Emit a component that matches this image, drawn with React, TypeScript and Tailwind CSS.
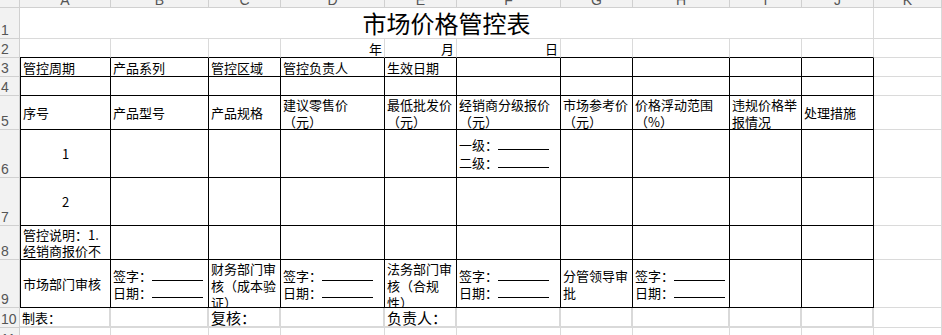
import type { ReactNode } from "react";

const borders = {
  k: "border-r border-b border-black",
  kl: "border-r border-b border-l border-black",
  g: "border-r border-b border-[#dadada]",
  t: "border-r border-b border-r-[#dadada] border-b-black",
  g2: "border-r-2 border-b-2 border-[#d9d9d9]",
};

type Variant = keyof typeof borders;

function Cell({
  v = "k",
  className = "",
  children,
}: {
  v?: Variant;
  className?: string;
  children?: ReactNode;
}) {
  return (
    <div
      className={`flex min-w-0 items-center overflow-hidden px-[2px] text-[13px] leading-[17px] text-black ${borders[v]} ${className}`}
    >
      {children}
    </div>
  );
}

function RowHead({ n }: { n: number }) {
  return (
    <div className="flex items-end overflow-hidden border-r border-b border-[#d0d0d0] bg-[#f2f2f2] pb-[1px] pl-[1px] font-['Liberation_Sans',sans-serif] text-[14px] leading-none text-[#555]">
      {n}
    </div>
  );
}

function Lines({ lines, className = "" }: { lines: string[]; className?: string }) {
  return (
    <div className={`flex flex-col ${className}`}>
      {lines.map((l) => (
        <span key={l} className="whitespace-nowrap">
          {l}
        </span>
      ))}
    </div>
  );
}

function Sign({ a, b, lh = "leading-[17px]" }: { a: string; b: string; lh?: string }) {
  return (
    <div className={`flex flex-col ${lh}`}>
      <span className="whitespace-nowrap">
        {a}
        <span className="inline-block w-[51px] border-b border-black align-baseline" />
      </span>
      <span className="whitespace-nowrap">
        {b}
        <span className="inline-block w-[51px] border-b border-black align-baseline" />
      </span>
    </div>
  );
}

const letters = ["A", "B", "C", "D", "E", "F", "G", "H", "I", "J", "K"];

export default function App() {
  return (
    <div className="h-[335px] w-[942px] overflow-hidden bg-white font-['Noto_Sans_CJK_SC',sans-serif]">
      <div className="grid grid-cols-[20px_91px_98px_72px_104px_72px_104px_72px_97px_72px_72px_1fr] grid-rows-[8px_31px_19px_19px_19px_34px_48px_48px_34px_48px_20px_20px]">
        {/* column letters, only their lower part shows */}
        <div className="border-r border-b border-[#d0d0d0] bg-[#f2f2f2]" />
        {letters.map((l) => (
          <div
            key={l}
            className="flex items-end justify-center overflow-hidden border-r border-b border-[#d0d0d0] bg-[#f2f2f2] font-['Liberation_Sans',sans-serif] text-[14px] leading-[10px] text-[#555]"
          >
            <span className="mb-[2px]">{l}</span>
          </div>
        ))}

        {/* row 1 */}
        <RowHead n={1} />
        <div className="col-span-10 flex items-center justify-center border-r border-b border-[#dadada] text-[24px] leading-none text-black">
          市场价格管控表
        </div>
        <Cell v="g" />

        {/* row 2 */}
        <RowHead n={2} />
        <Cell v="t" />
        <Cell v="t" />
        <Cell v="t" />
        <Cell v="t" className="justify-end leading-none">年</Cell>
        <Cell v="t" className="justify-end leading-none">月</Cell>
        <Cell v="t" className="justify-end leading-none">日</Cell>
        <Cell v="t" />
        <Cell v="t" />
        <Cell v="t" />
        <Cell v="t" />
        <Cell v="g" />

        {/* row 3 */}
        <RowHead n={3} />
        <Cell v="kl">管控周期</Cell>
        <Cell>产品系列</Cell>
        <Cell>管控区域</Cell>
        <Cell>管控负责人</Cell>
        <Cell>生效日期</Cell>
        <Cell />
        <Cell />
        <Cell />
        <Cell />
        <Cell />
        <Cell v="g" />

        {/* row 4 */}
        <RowHead n={4} />
        <Cell v="kl" />
        <Cell />
        <Cell />
        <Cell />
        <Cell />
        <Cell />
        <Cell />
        <Cell />
        <Cell />
        <Cell />
        <Cell v="g" />

        {/* row 5 */}
        <RowHead n={5} />
        <Cell v="kl">序号</Cell>
        <Cell>产品型号</Cell>
        <Cell>产品规格</Cell>
        <Cell>
          <Lines lines={["建议零售价", "（元）"]} />
        </Cell>
        <Cell>
          <Lines lines={["最低批发价", "（元）"]} />
        </Cell>
        <Cell>
          <Lines lines={["经销商分级报价", "（元）"]} />
        </Cell>
        <Cell>
          <Lines lines={["市场参考价", "（元）"]} />
        </Cell>
        <Cell>
          <Lines lines={["价格浮动范围", "（%）"]} />
        </Cell>
        <Cell>
          <Lines lines={["违规价格举", "报情况"]} />
        </Cell>
        <Cell>处理措施</Cell>
        <Cell v="g" />

        {/* row 6 */}
        <RowHead n={6} />
        <Cell v="kl" className="justify-center">1</Cell>
        <Cell />
        <Cell />
        <Cell />
        <Cell />
        <Cell>
          <Sign a="一级：" b="二级：" lh="leading-[18px]" />
        </Cell>
        <Cell />
        <Cell />
        <Cell />
        <Cell />
        <Cell v="g" />

        {/* row 7 */}
        <RowHead n={7} />
        <Cell v="kl" className="justify-center">2</Cell>
        <Cell />
        <Cell />
        <Cell />
        <Cell />
        <Cell />
        <Cell />
        <Cell />
        <Cell />
        <Cell />
        <Cell v="g" />

        {/* row 8 */}
        <RowHead n={8} />
        <Cell v="kl">
          <Lines lines={["管控说明：1.", "经销商报价不"]} className="leading-[16px]" />
        </Cell>
        <Cell />
        <Cell />
        <Cell />
        <Cell />
        <Cell />
        <Cell />
        <Cell />
        <Cell />
        <Cell />
        <Cell v="g" />

        {/* row 9 */}
        <RowHead n={9} />
        <Cell v="kl">市场部门审核</Cell>
        <Cell>
          <Sign a="签字：" b="日期：" />
        </Cell>
        <Cell className="items-start">
          <Lines lines={["财务部门审", "核（成本验", "证）"]} />
        </Cell>
        <Cell>
          <Sign a="签字：" b="日期：" />
        </Cell>
        <Cell className="items-start">
          <Lines lines={["法务部门审", "核（合规", "性）"]} />
        </Cell>
        <Cell>
          <Sign a="签字：" b="日期：" />
        </Cell>
        <Cell>
          <Lines lines={["分管领导审", "批"]} />
        </Cell>
        <Cell>
          <Sign a="签字：" b="日期：" />
        </Cell>
        <Cell />
        <Cell />
        <Cell v="g" />

        {/* row 10 */}
        <RowHead n={10} />
        <Cell v="g2" className="leading-none">制表：</Cell>
        <Cell v="g2" />
        <Cell v="g2" className="text-[15px] leading-none">复核：</Cell>
        <Cell v="g2" />
        <Cell v="g2" className="text-[15px] leading-none">负责人：</Cell>
        <Cell v="g2" />
        <Cell v="g2" />
        <Cell v="g2" />
        <Cell v="g2" />
        <Cell v="g2" />
        <Cell v="g" />

        {/* row 11 */}
        <RowHead n={11} />
        {letters.map((l) => (
          <Cell key={l} v="g" />
        ))}
      </div>
    </div>
  );
}
